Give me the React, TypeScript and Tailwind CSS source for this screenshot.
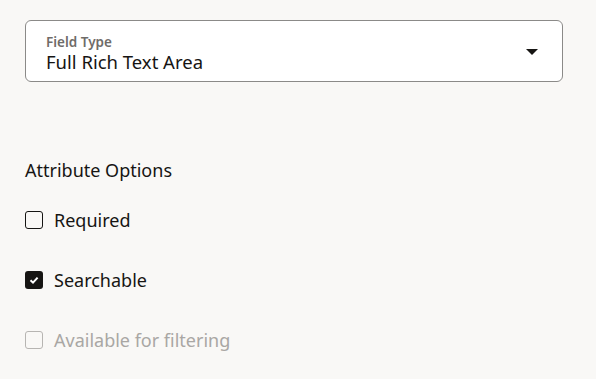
import React from "react";

function Check({ checked, disabled }: { checked?: boolean; disabled?: boolean }) {
  if (checked) {
    return (
      <span className="flex h-[18px] w-[18px] items-center justify-center rounded-[3px] bg-[#161513]">
        <svg width="12" height="12" viewBox="0 0 12 12">
          <path d="M2.5 6.2 L5 8.6 L9.6 3.6" fill="none" stroke="#fff" strokeWidth="2" />
        </svg>
      </span>
    );
  }
  return (
    <span
      className={
        "h-[18px] w-[18px] rounded-[3px] border-[1.5px] " +
        (disabled ? "border-[#b7b5b2]" : "border-[#161513]")
      }
    />
  );
}

export default function App() {
  return (
    <div
      className="min-h-[379px] w-[596px] bg-[#f9f8f6] pl-[25px] pt-[20px] text-[#161513]"
      style={{ fontFamily: '"Noto Sans", "Open Sans", sans-serif' }}
    >
      <div className="flex h-[62px] w-[538px] items-center rounded-[6px] border border-[#8b8a88] bg-white pl-[20px] pr-[24px]">
        <div className="flex flex-1 flex-col pt-[4px]">
          <span className="text-[13.5px] font-semibold leading-[17px] text-[#6f6c69]">Field Type</span>
          <span className="text-[18.5px] leading-[22px]">Full Rich Text Area</span>
        </div>
        <svg width="12" height="7" viewBox="0 0 12 7" className="mt-[3px]">
          <path d="M0 0 H12 L6 6 Z" fill="#161513" />
        </svg>
      </div>
      <div className="mt-[76px] text-[18px] leading-[24px]">Attribute Options</div>
      <div className="mt-[26px] flex flex-col gap-[36px]">
        <label className="flex h-[24px] items-center gap-[11px] text-[18px]">
          <Check />
          <span>Required</span>
        </label>
        <label className="flex h-[24px] items-center gap-[11px] text-[18px]">
          <Check checked />
          <span>Searchable</span>
        </label>
        <label className="flex h-[24px] items-center gap-[11px] text-[18px] text-[#a9a7a4]">
          <Check disabled />
          <span>Available for filtering</span>
        </label>
      </div>
    </div>
  );
}
